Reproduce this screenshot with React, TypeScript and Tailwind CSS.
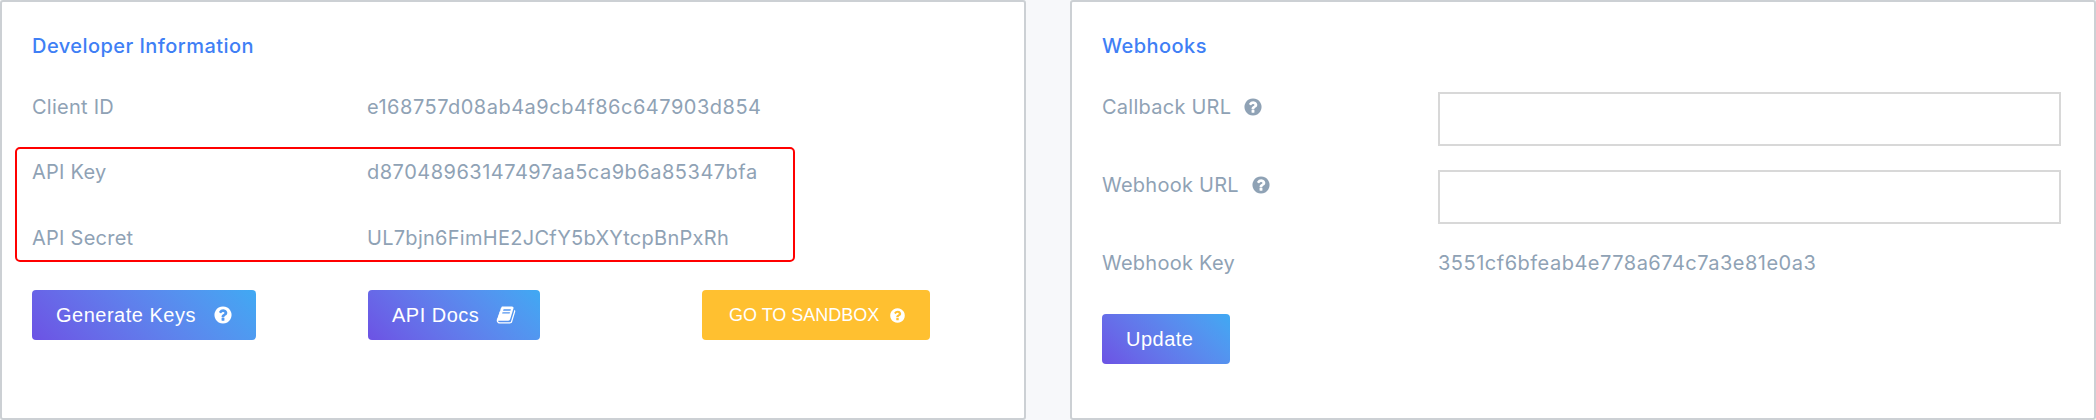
const labelText = "font-['Inter',sans-serif] text-[20px] leading-6 tracking-[0.25px] text-[#8fa2b5]"
const valueText = "font-['Inter',sans-serif] text-[20px] leading-6 tracking-[0.5px] text-[#8fa2b5]"
const gradient = 'bg-linear-45 from-[#6c52e4] to-[#3fa9f3]'

function QuestionIcon({ className }: { className: string }) {
  return (
    <svg viewBox="0 0 1792 1792" fill="currentColor" aria-hidden className={className}>
      <path d="M1024 1376v-192q0-14-9-23t-23-9h-192q-14 0-23 9t-9 23v192q0 14 9 23t23 9h192q14 0 23-9t9-23zm256-672q0-88-55.5-163t-138.5-116-170-41q-243 0-371 213-15 24 8 42l132 100q7 6 19 6 16 0 25-12 53-68 86-92 34-24 86-24 48 0 85.5 26t37.5 59q0 38-20 61t-68 45q-63 28-115.5 86.5t-52.5 125.5v36q0 14 9 23t23 9h192q14 0 23-9t9-23q0-19 21.5-49.5t54.5-49.5q32-18 49-28.5t46-35 44.5-48 28-60.5 12.5-81zm384 192q0 209-103 385.5t-279.5 279.5-385.5 103-385.5-103-279.5-279.5-103-385.5 103-385.5 279.5-279.5 385.5-103 385.5 103 279.5 279.5 103 385.5z" />
    </svg>
  )
}

function BookIcon({ className }: { className: string }) {
  return (
    <svg viewBox="0 0 1792 1792" fill="currentColor" aria-hidden className={className}>
      <path d="M1703 478q40 57 18 129l-275 906q-19 64-76.5 107.5t-122.5 43.5h-923q-77 0-148.5-53.5t-99.5-131.5q-24-67-2-127 0-4 3-27t4-37q1-8-3-21.5t-3-19.5q2-11 8-21t16.5-23.5 16.5-23.5q23-38 45-91.5t30-91.5q3-10 .5-30t-.5-28q3-11 17-28t17-23q21-36 42-92t25-90q1-9-2.5-32t.5-28q4-13 22-30.5t22-22.5q19-26 42.5-84.5t27.5-96.5q1-8-3-25.5t-2-26.5q2-8 9-18t18-23 17-21q8-12 16.5-30.5t15-35 16-36 19.5-32 26.5-23.5 36-11.5 47.5 5.5l-1 3q38-9 51-9h761q74 0 114 56t18 130l-274 906q-36 119-71.5 153.5t-128.5 34.5h-869q-27 0-38 15-11 16-1 43 24 70 144 70h923q29 0 56-15.5t35-41.5l300-987q7-22 5-57 38 15 59 43zm-1064 2q-4 13 2 22.5t20 9.5h608q13 0 25.5-9.5t16.5-22.5l21-64q4-13-2-22.5t-20-9.5h-608q-13 0-25.5 9.5t-16.5 22.5zm-83 256q-4 13 2 22.5t20 9.5h608q13 0 25.5-9.5t16.5-22.5l21-64q4-13-2-22.5t-20-9.5h-608q-13 0-25.5 9.5t-16.5 22.5z" />
    </svg>
  )
}

function Row({ name, value, width = 'w-[335px]' }: { name: string; value: string; width?: string }) {
  return (
    <div className="flex">
      <div className={`${width} ${labelText}`}>{name}</div>
      <div className={valueText}>{value}</div>
    </div>
  )
}

function CardTitle({ children }: { children: string }) {
  return (
    <h2 className="font-['Inter',sans-serif] text-[20px] leading-6 tracking-[0.45px] font-medium text-[#3f7ff5]">
      {children}
    </h2>
  )
}

function UrlField({ name }: { name: string }) {
  return (
    <div className="flex items-start">
      <div className={`flex w-[336px] items-center gap-3 pt-[3px] ${labelText}`}>
        {name}
        <QuestionIcon className="h-[20px] w-[20px] text-[#8fa2b5]" />
      </div>
      <input
        type="text"
        aria-label={name}
        className="h-[54px] w-[623px] border-2 border-[#d8d8d8] bg-white"
      />
    </div>
  )
}

export default function App() {
  return (
    <div className="flex h-[420px] w-[2096px] justify-between bg-[#f7f8fa]">
      <section className="h-full w-[1026px] rounded-[3px] border-2 border-[#ccd0d4] bg-white pl-[30px] pt-[32px]">
        <CardTitle>Developer Information</CardTitle>
        <div className="mt-[37px]">
          <Row name="Client ID" value="e168757d08ab4a9cb4f86c647903d854" />
        </div>
        <div className="-ml-[17px] mt-[28px] flex w-[780px] flex-col gap-[42px] rounded-[5px] border-2 border-[#ff0000] pb-[10px] pl-[15px] pt-[11px]">
          <Row name="API Key" value="d87048963147497aa5ca9b6a85347bfa" />
          <div className="flex">
            <div className={`w-[335px] ${labelText}`}>API Secret</div>
            <div className={`${valueText} tracking-[0.28px]`}>UL7bjn6FimHE2JCfY5bXYtcpBnPxRh</div>
          </div>
        </div>
        <div className="mt-[28px] flex font-['Liberation_Sans',sans-serif] text-white">
          <button type="button" className={`flex h-[50px] w-[224px] items-center gap-[17px] rounded-[4px] pl-[24px] text-[20px] tracking-[0.5px] ${gradient}`}>
            Generate Keys
            <QuestionIcon className="h-[20px] w-[20px]" />
          </button>
          <button type="button" className={`ml-[112px] flex h-[50px] w-[172px] items-center gap-[17px] rounded-[4px] pl-[24px] text-[20px] tracking-[0.5px] ${gradient}`}>
            API Docs
            <BookIcon className="h-[20px] w-[20px]" />
          </button>
          <button type="button" className="ml-[162px] flex h-[50px] w-[228px] items-center gap-[10px] rounded-[4px] bg-[#ffc030] pl-[27px] text-[18px]">
            GO TO SANDBOX
            <QuestionIcon className="h-[17px] w-[17px]" />
          </button>
        </div>
      </section>
      <section className="h-full w-[1026px] rounded-[3px] border-2 border-[#ccd0d4] bg-white pl-[30px] pt-[32px]">
        <CardTitle>Webhooks</CardTitle>
        <div className="mt-[34px] flex flex-col gap-[24px]">
          <UrlField name="Callback URL" />
          <UrlField name="Webhook URL" />
        </div>
        <div className="mt-[27px]">
          <Row name="Webhook Key" value="3551cf6bfeab4e778a674c7a3e81e0a3" width="w-[336px]" />
        </div>
        <button type="button" className={`mt-[39px] block h-[50px] w-[128px] rounded-[4px] pl-[24px] text-left font-['Liberation_Sans',sans-serif] text-[20px] tracking-[0.5px] text-white ${gradient}`}>
          Update
        </button>
      </section>
    </div>
  )
}
